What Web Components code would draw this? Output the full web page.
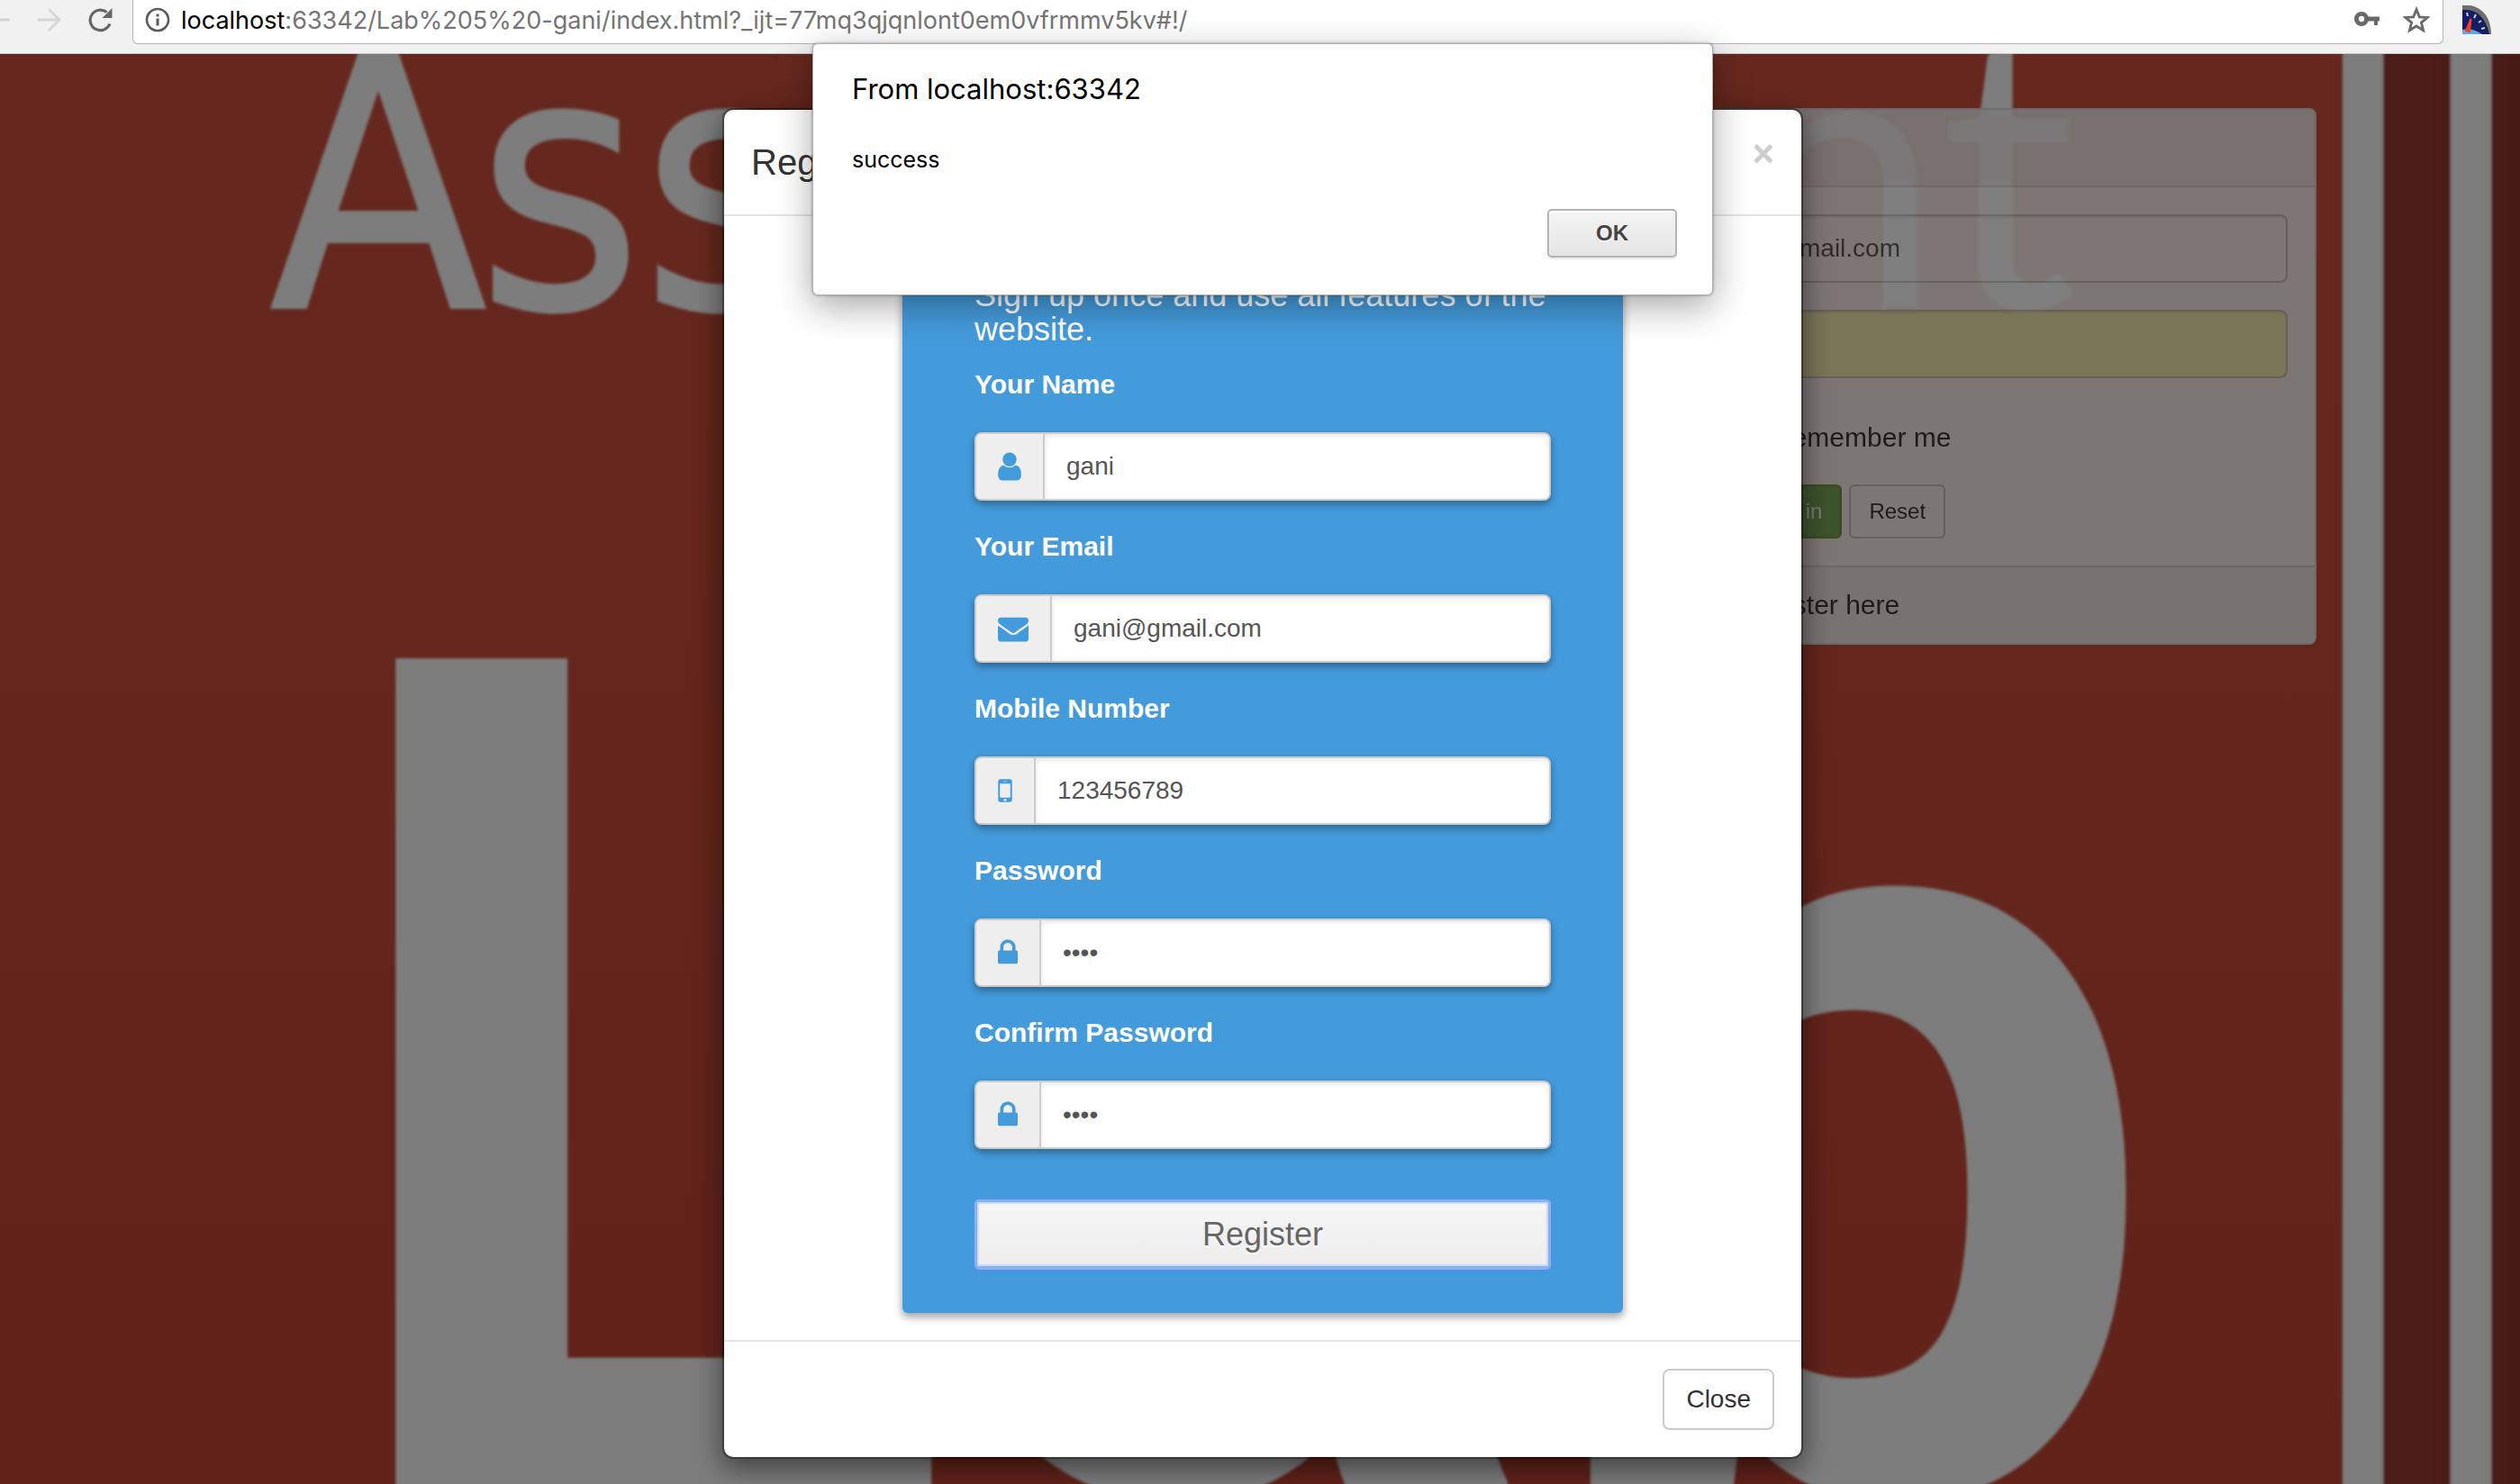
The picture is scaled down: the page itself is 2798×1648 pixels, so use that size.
<!DOCTYPE html>
<html lang="en">
<head>
<meta charset="utf-8">
<title>Lab 5 - Register</title>
<style>
  html, body { margin: 0; height: 100%; }
  body { overflow: hidden; font: 30px/44px "Liberation Sans", Arial, sans-serif; color: #333; }
</style>
</head>
<body>
<lab-app></lab-app>
<script>
const define = (name, html, setup) => {
  const template = document.createElement('template');
  template.innerHTML = html;
  customElements.define(name, class extends HTMLElement {
    constructor() {
      super();
      this.attachShadow({ mode: 'open' }).append(template.content.cloneNode(true));
    }
    connectedCallback() { if (setup) setup(this, this.shadowRoot); }
  });
};

const ICONS = {
  user: ['256 0 1280 1792', 26, 'M1536 1399q0 109-62.5 187t-150.5 78h-854q-88 0-150.5-78t-62.5-187q0-85 8.5-160.5t31.5-152 58.5-131 94-89 134.5-34.5q131 128 313 128t313-128q76 0 134.5 34.5t94 89 58.5 131 31.5 152 8.5 160.5zm-256-887q0 159-112.5 271.5t-271.5 112.5-271.5-112.5-112.5-271.5 112.5-271.5 271.5-112.5 271.5 112.5 112.5 271.5z'],
  envelope: ['0 0 1792 1792', 34, 'M1792 710v794q0 66-47 113t-113 47h-1472q-66 0-113-47t-47-113v-794q44 49 101 87 362 246 497 345 57 42 92.5 65.5t94.5 48 110 24.5h2q51 0 110-24.5t94.5-48 92.5-65.5q170-123 498-345 57-39 100-87zm0-294q0 79-49 151t-122 123q-376 261-468 325-10 7-42.5 31t-54 38.5-52 32.5-57.5 27-50 9h-2q-23 0-50-9t-57.5-27-52-32.5-54-38.5-42.5-31q-91-64-262-182.5t-205-142.5q-62-42-117-115.5t-55-136.5q0-78 41.5-130t118.5-52h1472q65 0 112.5 47t47.5 113z'],
  mobile: ['512 0 768 1792', 16, 'M976 1408q0-33-23.5-56.5t-56.5-23.5-56.5 23.5-23.5 56.5 23.5 56.5 56.5 23.5 56.5-23.5 23.5-56.5zm208-160v-704q0-13-9.5-22.5t-22.5-9.5h-512q-13 0-22.5 9.5t-9.5 22.5v704q0 13 9.5 22.5t22.5 9.5h512q13 0 22.5-9.5t9.5-22.5zm-192-848q0-16-16-16h-160q-16 0-16 16t16 16h160q16 0 16-16zm288-16v1024q0 52-38 90t-90 38h-512q-52 0-90-38t-38-90v-1024q0-52 38-90t90-38h512q52 0 90 38t38 90z'],
  lock: ['320 0 1152 1792', 22, 'M640 768h512v-192q0-106-75-181t-181-75-181 75-75 181v192zm832 96v576q0 40-28 68t-68 28h-960q-40 0-68-28t-28-68v-576q0-40 28-68t68-28h32v-192q0-184 132-316t316-132 316 132 132 316v192h32q40 0 68 28t28 68z']
};

/* Browser toolbar */
define('browser-bar', `
<style>
  :host { display: flex; align-items: flex-start; height: 59px; background: #f1f1f1; border-bottom: 1px solid #c9c9c9; }
  button { all: unset; display: flex; height: 44px; align-items: center; }
  svg { display: block; }
  .nav { display: flex; gap: 30px; width: 147px; }
  .box { flex: 1; display: flex; align-items: center; box-sizing: border-box; height: 49px; padding: 0 14px 5px 13px; background: #fff;
         border: 1px solid #b5b5b5; border-top: 0; border-radius: 0 0 6px 6px; }
  .url { flex: 1; margin-left: 12px; padding-top: 2px; font: 27px/44px Inter, sans-serif; color: #757575; white-space: nowrap; outline: 0; }
  .url b { font-weight: 400; color: #000; }
  .tools { display: flex; gap: 25px; }
  .ext { margin: 0 32px 0 21px; }
</style>
<div class="nav">
  <button aria-label="Back"><svg width="11" height="28" viewBox="0 0 11 28"><path d="M-4 14H9.500" stroke="#d0d0d0" stroke-width="3" stroke-linecap="round"/></svg></button>
  <button aria-label="Forward"><svg width="27" height="28" viewBox="0 0 27 28"><path d="M1.500 14H25M14 3L25 14L14 25" fill="none" stroke="#d6d6d6" stroke-width="3" stroke-linecap="round" stroke-linejoin="round"/></svg></button>
  <button aria-label="Reload"><svg width="28" height="28" viewBox="0 0 28 28"><path d="M20.500 5.500A11.300 11.300 0 1 0 24 18.500" fill="none" stroke="#676767" stroke-width="3.200"/><path d="M26.500 1V12H15.500Z" fill="#676767"/></svg></button>
</div>
<div class="box">
  <svg width="28" height="28" viewBox="0 0 28 28"><circle cx="14" cy="14" r="12" fill="none" stroke="#5b5b5b" stroke-width="2.600"/><path d="M12.500 7.500h3v3h-3zM12.500 12.500h3v8h-3z" fill="#5b5b5b"/></svg>
  <div class="url" role="textbox" contenteditable="true" spellcheck="false" aria-label="Address"><b>localhost</b>:63342/Lab%205%20-gani/index.html?_ijt=77mq3qjqnlont0em0vfrmmv5kv#!/</div>
  <div class="tools">
    <button aria-label="Saved passwords"><svg width="30" height="28" viewBox="0 0 30 28"><circle cx="9" cy="13" r="5.600" fill="none" stroke="#696969" stroke-width="4.800"/><path d="M16 10.500H29V15.500H27V20H23V15.500H16Z" fill="#696969"/></svg></button>
    <button aria-label="Bookmark"><svg width="30" height="30" viewBox="0 0 30 30"><path d="M15 3.500L18.300 11.800L27.200 12.400L20.400 18.100L22.600 26.800L15 22L7.400 26.800L9.600 18.100L2.800 12.400L11.700 11.800Z" fill="none" stroke="#6a6a6a" stroke-width="2.800"/></svg></button>
  </div>
</div>
<button class="ext" aria-label="Speed extension"><svg width="32" height="32" viewBox="0 0 32 32">
  <rect width="32" height="32" fill="#f1f1f1"/><path d="M0 0H9Q31 5 32 32H0Z" fill="#6c6f6b"/><path d="M0 5Q23 3 30 32H0Z" fill="#151d63"/>
  <path d="M0 27Q10 24 22 32H0Z" fill="#64a9dc"/><path d="M4 28L9.500 15L8 29Z" fill="#f0402f" stroke="#f0402f" stroke-width="2"/>
  <path d="M5 8l1 4M15 10l-2 4M21 17l-3 2M25 25l-4 1" stroke="#c9cdec" stroke-width="2"/></svg></button>
`);

/* Cover artwork that fills the page behind everything */
define('cover-art', `
<style>
  :host { display: block; overflow: hidden; }
  svg { display: block; width: 100%; height: 100%; }
</style>
<svg viewBox="0 0 2798 1588" preserveAspectRatio="xMidYMin slice" aria-hidden="true">
  <defs>
    <linearGradient id="red" x1="0" y1="0" x2="0" y2="1"><stop offset="0" stop-color="#cd513d"/><stop offset="1" stop-color="#c34535"/></linearGradient>
    <linearGradient id="dark" x1="0" y1="0" x2="1" y2="0"><stop offset="0" stop-color="#9a3c30"/><stop offset=".5" stop-color="#963a30"/><stop offset="1" stop-color="#8c342a"/></linearGradient>
    <filter id="soft"><feGaussianBlur stdDeviation="1.500"/></filter>
  </defs>
  <rect width="2798" height="1588" fill="url(#red)"/>
  <g filter="url(#soft)">
    <rect x="2640" y="-10" width="180" height="1610" fill="url(#dark)"/>
    <rect x="2601" y="-10" width="45" height="1610" fill="#fbfbfb"/>
    <rect x="2721" y="-10" width="45" height="1610" fill="#fbfbfb"/>
    <g fill="#fafafa">
      <g font-family="'DejaVu Sans Condensed', 'DejaVu Sans', sans-serif" font-size="390" stroke="#fafafa" stroke-width="4">
        <text x="300" y="281">A</text>
        <text x="530" y="281">ss</text>
      </g>
      <text x="2306" y="282" font-family="Lato, sans-serif" font-size="425" text-anchor="end">gnment</text>
      <g font-family="Roboto, sans-serif" font-weight="700">
        <text x="357" y="1596" font-size="1301">L</text>
        <text x="1046" y="1596" font-size="1250">a</text>
        <text x="2401" y="1596" font-size="1250" text-anchor="end">b</text>
      </g>
    </g>
  </g>
</svg>
`);

/* Sign-in panel */
define('signin-panel', `
<style>
  :host { display: block; box-sizing: border-box; width: 900px; border: 2px solid #ddd; border-radius: 8px; background: #fff; opacity: .9; overflow: hidden; }
  header, footer { padding: 20px 30px; background: #f5f5f5; }
  header { border-bottom: 2px solid #ddd; background: #f5f0f0; min-height: 44px; }
  footer { border-top: 2px solid #ddd; }
  form { display: grid; grid-template-columns: 194px 1fr; gap: 30px; padding: 30px; }
  label { font-weight: 700; padding-top: 16px; text-align: right; }
  input[type=email], input[type=password] { box-sizing: border-box; width: 100%; height: 76px; padding: 0 24px; border: 2px solid #ccc; border-radius: 8px;
    font: 28px/44px "Liberation Sans", sans-serif; color: #555; background: #fff; box-shadow: inset 0 2px 2px rgba(0,0,0,.075); }
  input[type=password] { background: #faffbd; }
  .check, .actions { grid-column: 2; display: flex; }
  .check { padding-top: 14px; }
  .check label { display: flex; gap: 14px; align-items: center; padding: 0; font-weight: 400; }
  .check input { width: 26px; height: 26px; margin: 0; }
  .actions { gap: 8px; }
  button { box-sizing: border-box; height: 60px; padding: 0 20px; border: 2px solid #ccc; border-radius: 6px; background: #fff; font: 24px/36px "Liberation Sans", sans-serif; color: #333; }
  button.ok { border-color: #67a03c; background: #73b05c; color: #fff; }
  a { color: inherit; text-decoration: none; }
</style>
<header></header>
<form>
  <label for="mail">Email</label><input id="mail" type="email" value="@gmail.com">
  <label for="pass">Password</label><input id="pass" type="password">
  <div class="check"><label><input type="checkbox">Remember me</label></div>
  <div class="actions"><button type="button" class="ok">Sign in</button><button type="reset">Reset</button></div>
</form>
<footer>Not Registered? <a href="#!/">Register here</a></footer>
`);

/* Labelled text box with an icon addon */
define('icon-field', `
<style>
  :host { display: block; }
  label { display: block; margin-bottom: 31px; font-weight: 700; line-height: 44px; color: #fff; }
  .group { display: flex; box-sizing: border-box; height: 76px; border: 2px solid #ccc; border-radius: 8px; background: #fff; overflow: hidden; }
  .wrap { border-radius: 8px; box-shadow: 0 4px 8px rgba(0,0,0,.35); }
  .icon { display: flex; align-items: center; padding: 0 24px; border-right: 2px solid #ccc; background: #eee; color: #449bdb; }
  input { flex: 1; min-width: 0; padding: 0 24px; border: 0; background: #fff; font: 28px/44px "Liberation Sans", sans-serif; color: #555;
    box-shadow: inset 0 2px 6px rgba(0,0,0,.1); outline: 0; }
</style>
<label for="box"><slot></slot></label>
<div class="wrap"><div class="group"><span class="icon"></span><input id="box"></div></div>
`, (host, root) => {
  const [box, width, d] = ICONS[host.getAttribute('icon')];
  root.querySelector('.icon').innerHTML = `<svg width="${width}" height="36" viewBox="${box}" fill="currentColor"><path d="${d}"/></svg>`;
  const input = root.querySelector('input');
  input.type = host.getAttribute('type') || 'text';
  input.value = host.getAttribute('value');
  input.setAttribute('aria-label', host.textContent);
});

/* Blue registration form */
define('register-form', `
<style>
  :host { display: block; width: 800px; margin: 0 auto; box-sizing: border-box; padding: 39px 80px 48px; border-radius: 6px; background: #449bdb;
    box-shadow: 0 4px 8px 1px rgba(0,0,0,.35); }
  p { margin: 0 0 20px; font-size: 36px; line-height: 38px; color: #fff; }
  form { display: flex; flex-direction: column; gap: 29px; }
  button { margin-top: 27px; height: 78px; box-sizing: border-box; border: 3px solid #8bb2ec; border-bottom-width: 4px; border-radius: 5px;
    background: linear-gradient(#f5f5f5, #ededed); box-shadow: 0 0 4px 1px #4c92ee, inset 0 0 0 2px #cddcf5;
    font: 36px/44px "Liberation Sans", sans-serif; color: #666; text-shadow: 0 2px 0 #fff; }
</style>
<p>Sign up once and use all features of the website.</p>
<form>
  <icon-field icon="user" value="gani">Your Name</icon-field>
  <icon-field icon="envelope" type="email" value="gani@gmail.com">Your Email</icon-field>
  <icon-field icon="mobile" type="tel" value="123456789">Mobile Number</icon-field>
  <icon-field icon="lock" type="password" value="1234">Password</icon-field>
  <icon-field icon="lock" type="password" value="1234">Confirm Password</icon-field>
  <button type="button">Register</button>
</form>
`);

/* Modal window */
define('modal-window', `
<style>
  :host { display: block; box-sizing: border-box; width: 1200px; border: 2px solid rgba(0,0,0,.4); border-radius: 12px; background: #fff; background-clip: padding-box;
    box-shadow: 0 10px 30px rgba(0,0,0,.5); }
  header { display: flex; justify-content: space-between; align-items: flex-start; padding: 30px; border-bottom: 2px solid #e5e5e5; }
  h4 { margin: 0; font-size: 40px; font-weight: 400; line-height: 56px; }
  .x { all: unset; font-size: 42px; font-weight: 700; line-height: 38px; color: #ccc; }
  main { padding: 30px; }
  footer { display: flex; justify-content: flex-end; padding: 30px; border-top: 2px solid #e5e5e5; }
  .close { box-sizing: border-box; height: 68px; padding: 0 24px; border: 2px solid #ccc; border-radius: 8px; background: #fff; font: 28px/44px "Liberation Sans", sans-serif; color: #333; }
</style>
<header><h4><slot name="title"></slot></h4><button class="x" aria-label="Close">×</button></header>
<main><slot></slot></main>
<footer><button class="close">Close</button></footer>
`);

/* Script alert raised by the page */
define('alert-box', `
<style>
  :host { display: flex; flex-direction: column; box-sizing: border-box; width: 1000px; height: 280px; padding: 28px 39px 41px 43px; border: 1px solid #b0b0b0;
    border-radius: 6px; background: #fff; color: #000; box-shadow: 0 12px 40px rgba(0,0,0,.35), 0 0 3px rgba(0,0,0,.4); font-family: Inter, sans-serif; }
  h1 { margin: 0 0 34px; font-size: 31px; font-weight: 400; line-height: 44px; }
  p { margin: 0; font-size: 25px; line-height: 44px; }
  button { align-self: flex-end; margin-top: auto; box-sizing: border-box; width: 144px; height: 54px; border: 2px solid #b4b4b4; border-radius: 5px;
    background: linear-gradient(#f4f4f4, #e5e5e5); box-shadow: 0 2px 0 #ececec, inset 0 2px 2px #fff; font: 700 24px/44px "Liberation Sans", sans-serif; color: #444; text-shadow: 0 2px 0 #f5f5f5; }
</style>
<h1>From localhost:63342</h1>
<p><slot></slot></p>
<button>OK</button>
`);

/* Whole window */
define('lab-app', `
<style>
  :host { display: flex; flex-direction: column; height: 100vh; position: relative; }
  .stage { flex: 1; min-height: 0; display: grid; grid-template: minmax(0, 1fr) / minmax(0, 1fr); overflow: hidden; isolation: isolate; }
  .stage > * { grid-area: 1 / 1; }
  cover-art { z-index: 0; }
  signin-panel { z-index: 1; justify-self: end; align-self: start; margin: 60px 226px 0 0; }
  .backdrop { z-index: 2; background: rgba(0,0,0,.5); }
  .dialog { z-index: 3; display: flex; justify-content: center; align-items: flex-start; padding: 60px 0 0 6px; }
  .alerts { position: absolute; z-index: 4; top: 48px; left: 6px; right: 0; display: flex; justify-content: center; }
</style>
<browser-bar></browser-bar>
<div class="stage">
  <cover-art></cover-art>
  <signin-panel></signin-panel>
  <div class="backdrop"></div>
  <div class="dialog"><modal-window><span slot="title">Registration</span><register-form></register-form></modal-window></div>
</div>
<div class="alerts"><alert-box>success</alert-box></div>
`);
</script>
</body>
</html>
